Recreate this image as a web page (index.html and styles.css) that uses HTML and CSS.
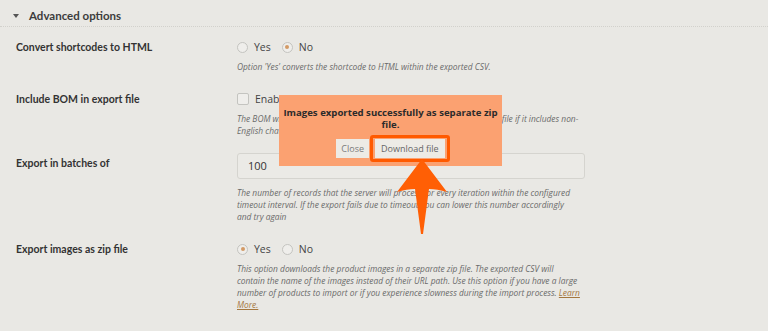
FILE: index.html
```html
<!DOCTYPE html>
<html lang="en">
    <head>
        <meta charset="utf-8"/>
        <title>Export - Advanced options</title>
        <link rel="stylesheet" href="styles.css">
    </head>

    <body>
		<div class="page">
			<!-- section header -->
			<div class="section-head">
				<span class="caret"></span>
				<span class="section-title">Advanced options</span>
			</div>

			<div class="row">
				<div class="label">Convert shortcodes to HTML</div>
				<div class="field">
					<div class="choices">
						<span class="radio"></span><span class="opt">Yes</span>
						<span class="radio checked"></span><span class="opt">No</span>
					</div>
					<div class="desc">Option 'Yes' converts the shortcode to HTML within the exported CSV.</div>
				</div>
			</div>

			<div class="row">
				<div class="label">Include BOM in export file</div>
				<div class="field">
					<div class="choices">
						<span class="check"></span><span class="opt">Enable</span>
					</div>
					<div class="desc">The BOM will help some programs like Microsoft Excel read your export file if it includes non-<br>English characters.</div>
				</div>
			</div>

			<div class="row batch">
				<div class="label">Export in batches of</div>
				<div class="field">
					<div class="input">100</div>
					<div class="desc">The number of records that the server will process for every iteration within the configured<br>timeout interval. If the export fails due to timeout you can lower this number accordingly<br>and try again</div>
				</div>
			</div>

			<div class="row">
				<div class="label">Export images as zip file</div>
				<div class="field">
					<div class="choices">
						<span class="radio checked"></span><span class="opt">Yes</span>
						<span class="radio"></span><span class="opt">No</span>
					</div>
					<div class="desc">This option downloads the product images in a separate zip file. The exported CSV will<br>contain the name of the images instead of their URL path. Use this option if you have a large<br>number of products to import or if you experience slowness during the import process. <a href="#">Learn<br>More.</a></div>
				</div>
			</div>
		</div>

		<!-- notice popup over the form -->
		<div class="notice">
			<div class="notice-text">Images exported successfully as separate zip<br>file.</div>
			<div class="notice-buttons">
				<span class="btn btn-close">Close</span>
				<span class="btn-ring"><span class="btn">Download file</span></span>
			</div>
		</div>

		<svg class="arrow" width="56" height="78" viewBox="0 0 56 78">
			<path d="M27 1 L52 34 Q42 31 34 31 L28 76 L26 76 L20 31 Q12 31 2 34 Z" fill="#ff5f05"/>
		</svg>
    </body>
</html>
```

FILE: styles.css
```css
html, body {
	margin: 0;
	padding: 0;
}

body {
	background: #e9e8e4;
	font-family: "Open Sans", "Noto Sans", sans-serif;
	color: #3a3a3a;
	width: 768px;
	height: 331px;
	overflow: hidden;
	position: relative;
}

.page {
	padding-bottom: 20px;
}

.section-head {
	display: flex;
	align-items: center;
	gap: 10px;
	padding: 8px 13px 2px;
	border-bottom: 1px dotted #d2d1cc;
}

.caret {
	width: 0;
	height: 0;
	border-left: 3px solid transparent;
	border-right: 3px solid transparent;
	border-top: 4px solid #555;
}

.section-title {
	font-family: Lato, "Open Sans", sans-serif;
	font-size: 11.5px;
	font-weight: 700;
	line-height: 16px;
	color: #3c3c3c;
}

.row {
	display: grid;
	grid-template-columns: 221px 348px;
	padding: 12px 0 0 16px;
}

.row + .row {
	padding-top: 18px;
}

.row.batch {
	padding-top: 15px;
}

.label {
	font-family: Lato, "Open Sans", sans-serif;
	font-size: 10.5px;
	font-weight: 700;
	line-height: 16px;
	color: #333;
}

.batch .label {
	padding-top: 3px;
}

.choices {
	display: flex;
	align-items: center;
	height: 16px;
}

.radio, .check {
	width: 11px;
	height: 11px;
	border: 1px solid #c4c4c0;
	background: #efeeeb;
	box-sizing: border-box;
	margin-right: 6px;
}

.radio {
	border-radius: 50%;
	position: relative;
}

.radio.checked:after {
	content: "";
	position: absolute;
	left: 2.5px;
	top: 2.5px;
	width: 4px;
	height: 4px;
	border-radius: 50%;
	background: #d39a66;
}

.check {
	width: 12px;
	height: 12px;
	border-radius: 2px;
}

.opt {
	font-size: 10.5px;
	color: #444;
	margin-right: 11px;
}

.desc {
	font-size: 8.4px;
	font-style: italic;
	line-height: 12px;
	color: #6a6a6a;
	margin-top: 6px;
	white-space: nowrap;
}

.desc a {
	color: #a4773f;
}

.input {
	height: 26px;
	box-sizing: border-box;
	border: 1px solid #d5d4cf;
	border-radius: 3px;
	background: #ebeae6;
	font-size: 11px;
	line-height: 24px;
	padding-left: 10px;
	color: #333;
	margin-top: 1px;
}

.batch .desc {
	margin-top: 8px;
}

/* popup */
.notice {
	position: absolute;
	left: 279px;
	top: 95px;
	width: 223px;
	height: 71px;
	background: #fba171;
	box-sizing: border-box;
	padding-top: 12px;
}

.notice-text {
	font-size: 9.6px;
	font-weight: 700;
	color: #2b2b2b;
	text-align: center;
	line-height: 12px;
	white-space: nowrap;
}

.notice-buttons {
	display: flex;
	justify-content: center;
	align-items: center;
	margin-top: 4px;
	padding-left: 5px;
}

.btn {
	display: inline-block;
	background: #edebe6;
	color: #7c7c7c;
	font-size: 9px;
	line-height: 19px;
	padding: 0 6px;
}

.btn-close {
	padding: 0 5px;
}

.btn-ring {
	display: inline-block;
	border: 3px solid #ff5a00;
	border-radius: 3px;
	padding: 1px 2px;
	margin-left: 1px;
}

.btn-ring .btn {
	color: #666;
	display: block;
}

.arrow {
	position: absolute;
	left: 395px;
	top: 158px;
}
```
